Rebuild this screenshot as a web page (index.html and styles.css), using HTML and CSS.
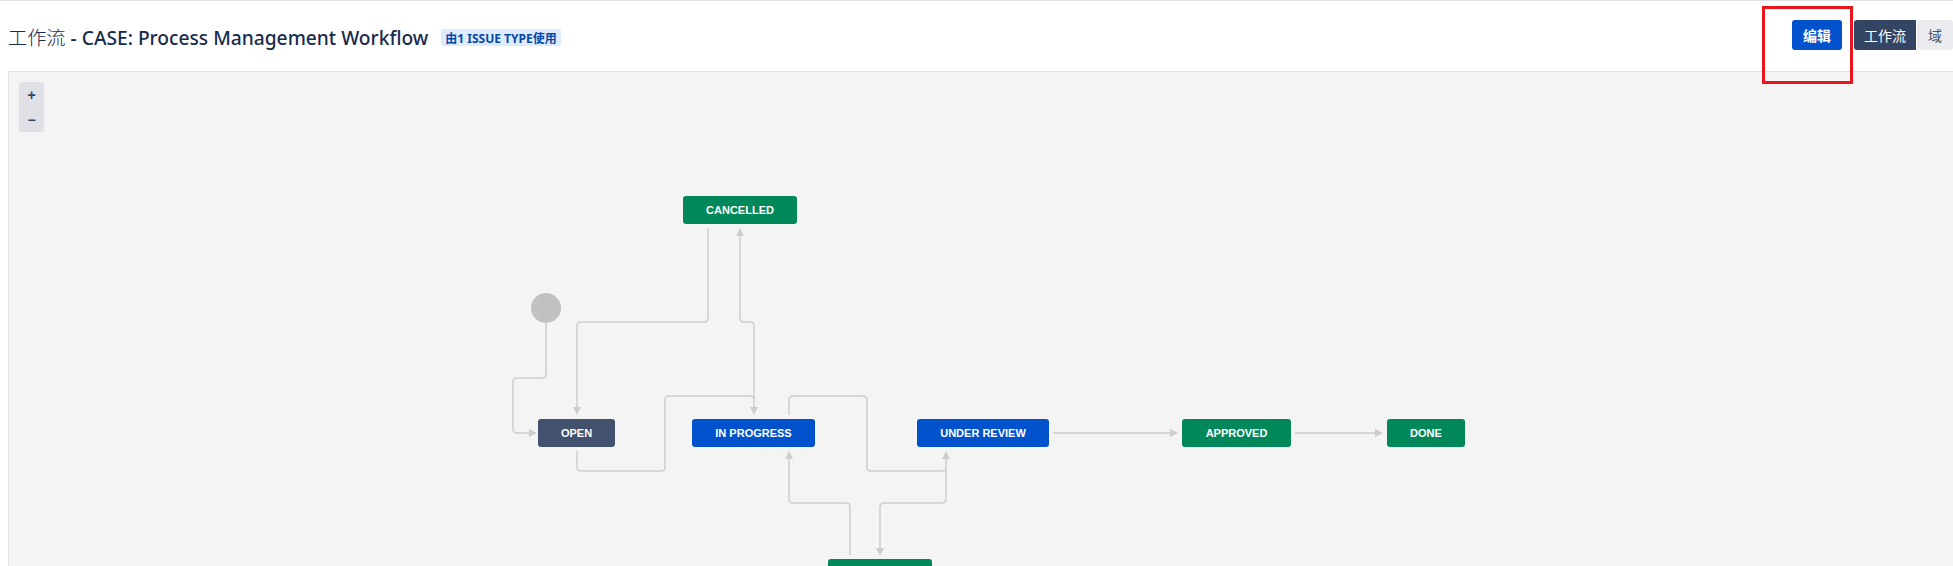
FILE: index.html
```html
<!DOCTYPE html>
<html lang="zh">
<head>
<meta charset="utf-8">
<title>工作流 - CASE: Process Management Workflow</title>
<link rel="stylesheet" href="styles.css">
</head>
<body>
<div class="page">
  <div class="topline"></div>
  <header class="header">
    <h1 class="title"><span class="cjk">工作流</span> - CASE: Process Management Workflow</h1>
    <span class="badge">由1 ISSUE TYPE使用</span>
    <div class="spacer"></div>
    <div class="actions">
      <button class="btn btn-primary">编辑</button>
      <div class="toggle">
        <button class="btn btn-dark">工作流</button>
        <button class="btn btn-light">域</button>
      </div>
    </div>
  </header>
  <div class="annotation"></div>
  <section class="canvas">
    <div class="zoom">
      <span class="zoom-btn">+</span>
      <span class="zoom-btn">−</span>
    </div>
    <svg class="edges" width="1944" height="600" viewBox="9 72 1944 600" xmlns="http://www.w3.org/2000/svg">
      <g class="edge" fill="none" stroke="#cdcdcd" stroke-width="1.5">
        <path d="M546 323 V374 Q546 378 542 378 H517 Q513 378 513 382 V429 Q513 433 517 433 H530"/>
        <path d="M708 228 V318 Q708 322 704 322 H581 Q577 322 577 326 V408"/>
        <path d="M740 235 V318 Q740 322 744 322 H750 Q754 322 754 326 V408"/>
        <path d="M577 451 V467 Q577 471 581 471 H661 Q665 471 665 467 V400 Q665 396 669 396 H750 Q754 396 754 400"/>
        <path d="M789 415 V400 Q789 396 793 396 H863 Q867 396 867 400 V467 Q867 471 871 471 H942 Q946 471 946 467 V458"/>
        <path d="M850 555 V507 Q850 503 846 503 H793 Q789 503 789 499 V458"/>
        <path d="M946 467 V499 Q946 503 942 503 H884 Q880 503 880 507 V549"/>
        <path d="M1053 433 H1171"/>
        <path d="M1295 433 H1376"/>
      </g>
      <g class="arrows" fill="#cdcdcd">
        <polygon points="537,433 529,429 529,437"/>
        <polygon points="577,415 573,407 581,407"/>
        <polygon points="740,228 736,236 744,236"/>
        <polygon points="754,415 750,407 758,407"/>
        <polygon points="946,451 942,459 950,459"/>
        <polygon points="789,451 785,459 793,459"/>
        <polygon points="880,556 876,548 884,548"/>
        <polygon points="1178,433 1170,429 1170,437"/>
        <polygon points="1383,433 1375,429 1375,437"/>
      </g>
      <circle cx="546" cy="308" r="15" fill="#c1c1c1"/>
    </svg>
    <div class="node node-done" style="left:674px;top:124px;width:114px">CANCELLED</div>
    <div class="node node-todo" style="left:529px;top:347px;width:77px">OPEN</div>
    <div class="node node-progress" style="left:683px;top:347px;width:123px">IN PROGRESS</div>
    <div class="node node-progress" style="left:908px;top:347px;width:132px">UNDER REVIEW</div>
    <div class="node node-done" style="left:1173px;top:347px;width:109px">APPROVED</div>
    <div class="node node-done" style="left:1378px;top:347px;width:78px">DONE</div>
    <div class="node node-done" style="left:819px;top:487px;width:104px"></div>
  </section>
</div>
</body>
</html>
```

FILE: styles.css
```css
html, body {
  margin: 0;
  padding: 0;
  background: #ffffff;
  overflow: hidden;
}

body {
  font-family: "Noto Sans", "Noto Sans CJK SC", sans-serif;
  color: #172b4d;
}

.page {
  position: relative;
  width: 1953px;
}

.topline {
  height: 1px;
  background: #dfe1e6;
}

.header {
  display: flex;
  align-items: center;
  height: 70px;
  padding-left: 8px;
}

.title {
  margin: 0;
  font-size: 19.2px;
  font-weight: 500;
  color: #172b4d;
  white-space: nowrap;
  line-height: 24px;
  padding-top: 2px;
}

.title .cjk {
  font-family: "Noto Sans CJK SC", sans-serif;
  font-weight: 300;
}

.badge {
  margin-left: 13px;
  margin-top: 3px;
  display: inline-flex;
  align-items: center;
  height: 17px;
  padding: 0 4px;
  border-radius: 3px;
  background: #deebff;
  color: #0747a6;
  font-size: 12px;
  font-weight: 700;
  white-space: nowrap;
  font-family: "Noto Sans", "Noto Sans CJK SC", sans-serif;
}

.spacer {
  flex: 1;
}

.actions {
  display: flex;
  align-items: center;
  gap: 12px;
  margin-top: -2px;
}

.toggle {
  display: flex;
  gap: 1px;
}

.btn {
  height: 30px;
  border: 0;
  border-radius: 3px;
  font-family: "Noto Sans CJK SC", sans-serif;
  font-size: 14px;
  padding: 0 11px;
  cursor: pointer;
}

.btn-primary {
  background: #0052cc;
  color: #ffffff;
  font-weight: 700;
}

.btn-dark {
  background: #344563;
  color: #ffffff;
  border-radius: 3px 0 0 3px;
  padding: 0 10px;
}

.btn-light {
  background: #ebecf0;
  color: #42526e;
  border-radius: 0 3px 3px 0;
}

.annotation {
  position: absolute;
  left: 1762px;
  top: 6px;
  width: 85px;
  height: 72px;
  border: 3px solid #e8141e;
  z-index: 5;
}

.canvas {
  position: relative;
  margin-left: 8px;
  height: 600px;
  background: #f4f4f4;
  border-top: 1px solid #dfe1e6;
  border-left: 1px solid #dfe1e6;
}

.zoom {
  position: absolute;
  left: 10px;
  top: 10px;
  width: 25px;
  height: 50px;
  display: flex;
  flex-direction: column;
  background: #dfe1e6;
  border-radius: 3px;
  z-index: 2;
}

.zoom-btn {
  height: 25px;
  display: flex;
  align-items: center;
  justify-content: center;
  font-family: "Liberation Sans", sans-serif;
  font-weight: 700;
  font-size: 14px;
  color: #344563;
}

.edges {
  position: absolute;
  left: 0;
  top: 0;
}

.node {
  position: absolute;
  height: 28px;
  border-radius: 3px;
  display: flex;
  align-items: center;
  justify-content: center;
  font-family: "Liberation Sans", Arial, sans-serif;
  font-weight: 700;
  font-size: 11px;
  color: #ffffff;
  white-space: nowrap;
}

.node-done {
  background: #00875a;
}

.node-progress {
  background: #0052cc;
}

.node-todo {
  background: #42526e;
}
```
